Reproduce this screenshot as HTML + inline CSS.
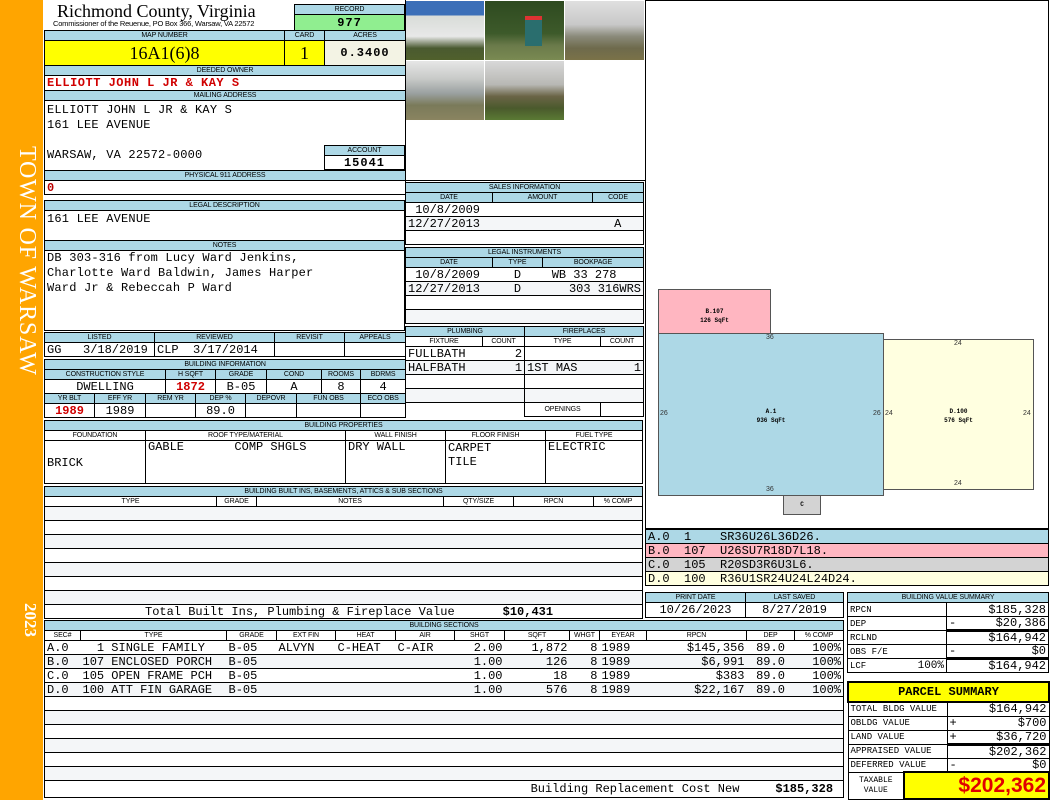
<!DOCTYPE html>
<html><head><meta charset="utf-8"><style>
*{margin:0;padding:0;box-sizing:border-box}
body{width:1050px;height:800px;position:relative;background:#fff;overflow:hidden;font-family:"Liberation Mono",monospace;font-size:12px;color:#000}
.a{position:absolute}
table{position:absolute;border-collapse:collapse;table-layout:fixed}
td{border:1px solid #000;padding:0 2px;overflow:hidden;white-space:nowrap;font:12px "Liberation Mono",monospace;height:14px;line-height:12px}
td.h,.h{background:#add8e6;font:7px "Liberation Sans",sans-serif;text-align:center;height:10px;line-height:9px;padding:0;letter-spacing:-.1px}
tr.g td{background:#f4f6f8}
.c{text-align:center}.r{text-align:right}
.box{position:absolute;border:1px solid #000}
.red{color:#d00000;font-weight:bold}
.bs td{border-left:none;border-right:none}
.bs td:first-child{border-left:1px solid #000}
.bs td:last-child{border-right:1px solid #000}
</style></head><body>
<div class="a" style="left:0;top:0;width:43px;height:800px;background:#ffa500"></div>
<div class="a" style="left:6px;top:146px;width:34px;height:250px;writing-mode:vertical-rl;font:24px 'Liberation Serif',serif;color:#fff;letter-spacing:.8px">TOWN OF WARSAW</div>
<div class="a" style="left:10px;top:603px;width:30px;height:60px;writing-mode:vertical-rl;font:bold 17px 'Liberation Serif',serif;color:#fff">2023</div>

<div class="a" style="left:57px;top:1px;font:18px 'Liberation Serif',serif">Richmond County, Virginia</div>
<div class="a" style="left:53px;top:19px;font:7.5px 'Liberation Sans',sans-serif;letter-spacing:-.2px">Commissioner of the Reuenue, PO Box 366, Warsaw, VA 22572</div>
<table style="left:294px;top:4px;width:111px"><tr><td class="h">RECORD</td></tr><tr><td class="c" style="background:#90ee90;font-weight:bold;height:16px;letter-spacing:1px">977</td></tr></table>

<table style="left:44px;top:30px;width:361px">
<col style="width:240px"><col style="width:40px"><col style="width:81px">
<tr><td class="h">MAP NUMBER</td><td class="h">CARD</td><td class="h">ACRES</td></tr>
<tr><td class="c" style="background:#ffff00;height:25px;font:18px 'Liberation Serif',serif">16A1(6)8</td><td class="c" style="background:#ffff00;font:18px 'Liberation Serif',serif">1</td><td class="c" style="background:#f3f3e4;font-weight:bold;letter-spacing:1px">0.3400</td></tr>
<tr><td colspan="3" class="h">DEEDED OWNER</td></tr>
<tr><td colspan="3" class="red" style="height:15px;letter-spacing:.5px">ELLIOTT JOHN L JR &amp; KAY S</td></tr>
<tr><td colspan="3" class="h">MAILING ADDRESS</td></tr>
<tr><td colspan="3" style="height:70px;vertical-align:top;line-height:15px;padding-top:2px;letter-spacing:.2px">ELLIOTT JOHN L JR &amp; KAY S<br>161 LEE AVENUE<br><br>WARSAW, VA 22572-0000</td></tr>
<tr><td colspan="3" class="h">PHYSICAL 911 ADDRESS</td></tr>
<tr><td colspan="3" style="color:#b00;font-weight:bold;height:14px">0</td></tr>
</table>
<table style="left:324px;top:145px;width:81px"><tr><td class="h">ACCOUNT</td></tr><tr><td class="c" style="font-weight:bold;background:#fff;letter-spacing:1px">15041</td></tr></table>

<table style="left:44px;top:200px;width:361px">
<tr><td class="h">LEGAL DESCRIPTION</td></tr>
<tr><td style="height:30px;vertical-align:top;padding-top:2px;letter-spacing:.2px">161 LEE AVENUE</td></tr>
<tr><td class="h">NOTES</td></tr>
<tr><td style="height:80px;vertical-align:top;line-height:15px;white-space:normal;letter-spacing:.2px">DB 303-316 from Lucy Ward Jenkins,<br>Charlotte Ward Baldwin, James Harper<br>Ward Jr &amp; Rebeccah P Ward</td></tr>
</table>

<table style="left:44px;top:332px;width:361px">
<col style="width:110px"><col style="width:120px"><col style="width:70px"><col style="width:61px">
<tr><td class="h">LISTED</td><td class="h">REVIEWED</td><td class="h">REVISIT</td><td class="h">APPEALS</td></tr>
<tr><td>GG&nbsp;&nbsp;&nbsp;3/18/2019</td><td>CLP&nbsp;&nbsp;3/17/2014</td><td></td><td></td></tr>
</table>

<table style="left:44px;top:359px;width:361px">
<col style="width:50px"><col style="width:51px"><col style="width:20px"><col style="width:30px"><col style="width:20px"><col style="width:30px"><col style="width:21px"><col style="width:30px"><col style="width:25px"><col style="width:19px"><col style="width:20px"><col style="width:45px">
<tr><td colspan="12" class="h">BUILDING INFORMATION</td></tr>
<tr><td colspan="3" class="h">CONSTRUCTION STYLE</td><td colspan="2" class="h">H SQFT</td><td colspan="2" class="h">GRADE</td><td colspan="2" class="h">COND</td><td colspan="2" class="h">ROOMS</td><td class="h">BDRMS</td></tr>
<tr><td colspan="3" class="c">DWELLING</td><td colspan="2" class="c red">1872</td><td colspan="2" class="c">B-05</td><td colspan="2" class="c">A</td><td colspan="2" class="c">8</td><td class="c">4</td></tr>
<tr><td class="h">YR BLT</td><td class="h">EFF YR</td><td colspan="2" class="h">REM YR</td><td colspan="2" class="h">DEP %</td><td colspan="2" class="h">DEPOVR</td><td colspan="3" class="h">FUN OBS</td><td class="h">ECO OBS</td></tr>
<tr><td class="c red">1989</td><td class="c">1989</td><td colspan="2"></td><td colspan="2" class="c">89.0</td><td colspan="2"></td><td colspan="3"></td><td></td></tr>
</table>

<div class="box" style="left:405px;top:0;width:241px;height:181px;border-top:none"></div>
<div class="a" style="left:406px;top:1px;width:78px;height:59px;background:linear-gradient(#3b6fb8 0,#3b6fb8 25%,#d8dcd8 25%,#e8e8e8 60%,#4a5a30 80%,#50602c)"></div>
<div class="a" style="left:485px;top:1px;width:79px;height:59px;background:linear-gradient(#2e4a20,#3d5a2a 55%,#6a7a4a 75%,#7a8a52)"></div>
<div class="a" style="left:525px;top:16px;width:17px;height:30px;background:#2a6e6e;border-top:4px solid #d33"></div>
<div class="a" style="left:565px;top:1px;width:79px;height:59px;background:linear-gradient(#e0e0e0,#c8c8c8 40%,#8a8a7a 60%,#6e6a4c 80%,#7a7248)"></div>
<div class="a" style="left:406px;top:61px;width:78px;height:59px;background:linear-gradient(#e6e6e6,#c8cac8 30%,#9aa0a0 55%,#7a7a5a 75%,#8a8460)"></div>
<div class="a" style="left:485px;top:61px;width:79px;height:59px;background:linear-gradient(#d8d8d8,#b8b8b4 40%,#6a6446 60%,#4a5a2c 80%,#5a7a34)"></div>

<table style="left:405px;top:182px;width:238px">
<col style="width:87px"><col style="width:100px"><col style="width:51px">
<tr><td colspan="3" class="h">SALES INFORMATION</td></tr>
<tr><td class="h">DATE</td><td class="h">AMOUNT</td><td class="h">CODE</td></tr>
<tr><td style="border-right:none">&nbsp;10/8/2009</td><td style="border-left:none;border-right:none"></td><td style="border-left:none"></td></tr>
<tr class="g"><td style="border-right:none">12/27/2013</td><td style="border-left:none;border-right:none"></td><td class="c" style="border-left:none">A</td></tr>
<tr><td colspan="3"></td></tr>
</table>
<table style="left:405px;top:247px;width:238px">
<col style="width:87px"><col style="width:50px"><col style="width:101px">
<tr><td colspan="3" class="h">LEGAL INSTRUMENTS</td></tr>
<tr><td class="h">DATE</td><td class="h">TYPE</td><td class="h">BOOKPAGE</td></tr>
<tr><td style="border-right:none">&nbsp;10/8/2009</td><td class="c" style="border:none;border-bottom:1px solid #000">D</td><td style="border-left:none">&nbsp;WB 33 278</td></tr>
<tr class="g"><td style="border-right:none">12/27/2013</td><td class="c" style="border:none;border-bottom:1px solid #000">D</td><td class="r" style="border-left:none">303 316WRS</td></tr>
<tr><td colspan="3"></td></tr>
<tr class="g"><td colspan="3"></td></tr>
</table>

<table style="left:405px;top:326px;width:238px">
<col style="width:77px"><col style="width:42px"><col style="width:76px"><col style="width:43px">
<tr><td colspan="2" class="h">PLUMBING</td><td colspan="2" class="h">FIREPLACES</td></tr>
<tr><td class="h" style="background:#fff">FIXTURE</td><td class="h" style="background:#fff">COUNT</td><td class="h" style="background:#fff">TYPE</td><td class="h" style="background:#fff">COUNT</td></tr>
<tr><td style="border-right:none">FULLBATH</td><td class="r" style="border-left:none">2</td><td colspan="2"></td></tr>
<tr class="g"><td style="border-right:none">HALFBATH</td><td class="r" style="border-left:none">1</td><td style="border-right:none">1ST MAS</td><td class="r" style="border-left:none">1</td></tr>
<tr><td colspan="2"></td><td colspan="2"></td></tr>
<tr class="g"><td colspan="2"></td><td colspan="2"></td></tr>
<tr><td colspan="2" style="border-left:none;border-bottom:none;background:#fff"></td><td class="h" style="background:#fff;height:14px">OPENINGS</td><td></td></tr>
</table>

<table style="left:44px;top:420px;width:598px">
<col style="width:101px"><col style="width:200px"><col style="width:100px"><col style="width:100px"><col style="width:97px">
<tr><td colspan="5" class="h">BUILDING PROPERTIES</td></tr>
<tr><td class="h" style="background:#fff">FOUNDATION</td><td class="h" style="background:#fff">ROOF TYPE/MATERIAL</td><td class="h" style="background:#fff">WALL FINISH</td><td class="h" style="background:#fff">FLOOR FINISH</td><td class="h" style="background:#fff">FUEL TYPE</td></tr>
<tr><td style="height:43px;vertical-align:top;padding-top:16px">BRICK</td><td style="vertical-align:top">GABLE&nbsp;&nbsp;&nbsp;&nbsp;&nbsp;&nbsp;&nbsp;COMP SHGLS</td><td style="vertical-align:top">DRY WALL</td><td style="vertical-align:top;line-height:14px">CARPET<br>TILE</td><td style="vertical-align:top">ELECTRIC</td></tr>
</table>

<table style="left:44px;top:486px;width:598px">
<col style="width:172px"><col style="width:40px"><col style="width:187px"><col style="width:70px"><col style="width:80px"><col style="width:49px">
<tr><td colspan="6" class="h">BUILDING BUILT INS, BASEMENTS, ATTICS &amp; SUB SECTIONS</td></tr>
<tr><td class="h" style="background:#fff">TYPE</td><td class="h" style="background:#fff">GRADE</td><td class="h" style="background:#fff">NOTES</td><td class="h" style="background:#fff">QTY/SIZE</td><td class="h" style="background:#fff">RPCN</td><td class="h" style="background:#fff">% COMP</td></tr>
<tr class="g"><td colspan="6"></td></tr><tr><td colspan="6"></td></tr><tr class="g"><td colspan="6"></td></tr><tr><td colspan="6"></td></tr><tr class="g"><td colspan="6"></td></tr><tr><td colspan="6"></td></tr><tr class="g"><td colspan="6"></td></tr>
<tr><td colspan="6" style="height:14px"><span style="position:relative;left:98px">Total Built Ins, Plumbing &amp; Fireplace Value</span><b style="position:relative;left:146px">$10,431</b></td></tr>
</table>

<table class="bs" style="left:44px;top:620px;width:799px">
<col style="width:36px"><col style="width:146px"><col style="width:50px"><col style="width:59px"><col style="width:60px"><col style="width:59px"><col style="width:50px"><col style="width:65px"><col style="width:30px"><col style="width:47px"><col style="width:100px"><col style="width:48px"><col style="width:49px">
<tr><td colspan="13" class="h" style="border:1px solid #000">BUILDING SECTIONS</td></tr>
<tr><td class="h" style="background:#fff;border:1px solid #000">SEC#</td><td class="h" style="background:#fff;border:1px solid #000">TYPE</td><td class="h" style="background:#fff;border:1px solid #000">GRADE</td><td class="h" style="background:#fff;border:1px solid #000">EXT FIN</td><td class="h" style="background:#fff;border:1px solid #000">HEAT</td><td class="h" style="background:#fff;border:1px solid #000">AIR</td><td class="h" style="background:#fff;border:1px solid #000">SHGT</td><td class="h" style="background:#fff;border:1px solid #000">SQFT</td><td class="h" style="background:#fff;border:1px solid #000">WHGT</td><td class="h" style="background:#fff;border:1px solid #000">EYEAR</td><td class="h" style="background:#fff;border:1px solid #000">RPCN</td><td class="h" style="background:#fff;border:1px solid #000">DEP</td><td class="h" style="background:#fff;border:1px solid #000">% COMP</td></tr>
<tr><td>A.0</td><td>&nbsp;&nbsp;1 SINGLE FAMILY</td><td>B-05</td><td>ALVYN</td><td>C-HEAT</td><td>C-AIR</td><td class="r">2.00</td><td class="r">1,872</td><td class="r">8</td><td>1989</td><td class="r">$145,356</td><td class="c">89.0</td><td class="r">100%</td></tr>
<tr class="g"><td>B.0</td><td>107 ENCLOSED PORCH</td><td>B-05</td><td></td><td></td><td></td><td class="r">1.00</td><td class="r">126</td><td class="r">8</td><td>1989</td><td class="r">$6,991</td><td class="c">89.0</td><td class="r">100%</td></tr>
<tr><td>C.0</td><td>105 OPEN FRAME PCH</td><td>B-05</td><td></td><td></td><td></td><td class="r">1.00</td><td class="r">18</td><td class="r">8</td><td>1989</td><td class="r">$383</td><td class="c">89.0</td><td class="r">100%</td></tr>
<tr class="g"><td>D.0</td><td>100 ATT FIN GARAGE</td><td>B-05</td><td></td><td></td><td></td><td class="r">1.00</td><td class="r">576</td><td class="r">8</td><td>1989</td><td class="r">$22,167</td><td class="c">89.0</td><td class="r">100%</td></tr>
<tr><td colspan="13" style="border:1px solid #000"></td></tr><tr class="g"><td colspan="13" style="border:1px solid #000"></td></tr><tr><td colspan="13" style="border:1px solid #000"></td></tr><tr class="g"><td colspan="13" style="border:1px solid #000"></td></tr><tr><td colspan="13" style="border:1px solid #000"></td></tr><tr class="g"><td colspan="13" style="border:1px solid #000"></td></tr>
<tr><td colspan="13" style="height:17px;text-align:right;padding-right:10px;border:1px solid #000">Building Replacement Cost New&nbsp;&nbsp;&nbsp;&nbsp;&nbsp;<b>$185,328</b></td></tr>
</table>

<div class="box" style="left:645px;top:0;width:404px;height:529px"></div>
<div class="a" style="left:658px;top:289px;width:113px;height:45px;background:#ffb6c1;border:1px solid #555;font:bold 6px 'Liberation Mono',monospace;text-align:center;padding-top:17px;line-height:9px">B.107<br>126 SqFt</div>
<div class="a" style="left:883px;top:339px;width:151px;height:151px;background:#ffffe0;border:1px solid #555;font:bold 6px 'Liberation Mono',monospace;text-align:center;padding-top:67px;line-height:9px">D.100<br>576 SqFt</div>
<div class="a" style="left:658px;top:333px;width:226px;height:163px;background:#add8e6;border:1px solid #555;font:bold 6px 'Liberation Mono',monospace;text-align:center;padding-top:73px;line-height:9px">A.1<br>936 SqFt</div>
<div class="a" style="left:783px;top:495px;width:38px;height:20px;background:#d3d3d3;border:1px solid #555;font:bold 6px 'Liberation Mono',monospace;text-align:center;line-height:18px">C</div>
<div class="a" style="font:7px 'Liberation Sans',sans-serif;color:#333;left:766px;top:334px">36</div>
<div class="a" style="font:7px 'Liberation Sans',sans-serif;color:#333;left:766px;top:486px">36</div>
<div class="a" style="font:7px 'Liberation Sans',sans-serif;color:#333;left:660px;top:410px">26</div>
<div class="a" style="font:7px 'Liberation Sans',sans-serif;color:#333;left:873px;top:410px">26</div>
<div class="a" style="font:7px 'Liberation Sans',sans-serif;color:#333;left:885px;top:410px">24</div>
<div class="a" style="font:7px 'Liberation Sans',sans-serif;color:#333;left:1023px;top:410px">24</div>
<div class="a" style="font:7px 'Liberation Sans',sans-serif;color:#333;left:954px;top:340px">24</div>
<div class="a" style="font:7px 'Liberation Sans',sans-serif;color:#333;left:954px;top:480px">24</div>

<table style="left:645px;top:529px;width:404px">
<tr><td style="background:#add8e6;font-size:12px;height:14px">A.0&nbsp;&nbsp;1&nbsp;&nbsp;&nbsp;&nbsp;SR36U26L36D26.</td></tr>
<tr><td style="background:#ffb6c1;font-size:12px">B.0&nbsp;&nbsp;107&nbsp;&nbsp;U26SU7R18D7L18.</td></tr>
<tr><td style="background:#d3d3d3;font-size:12px">C.0&nbsp;&nbsp;105&nbsp;&nbsp;R20SD3R6U3L6.</td></tr>
<tr><td style="background:#ffffe0;font-size:12px">D.0&nbsp;&nbsp;100&nbsp;&nbsp;R36U1SR24U24L24D24.</td></tr>
</table>

<table style="left:645px;top:592px;width:198px">
<col style="width:100px"><col style="width:98px">
<tr><td class="h">PRINT DATE</td><td class="h">LAST SAVED</td></tr>
<tr><td class="c" style="font-size:12px;height:15px">10/26/2023</td><td class="c" style="font-size:12px">8/27/2019</td></tr>
</table>

<table style="left:847px;top:592px;width:201px">
<col style="width:99px"><col style="width:102px">
<tr><td colspan="2" class="h">BUILDING VALUE SUMMARY</td></tr>
<tr><td style="font-size:9px">RPCN</td><td class="r" style="font-size:12px">$185,328</td></tr>
<tr><td style="font-size:9px">DEP</td><td class="r" style="font-size:12px;border-bottom:3px solid #000"><span style="float:left">-</span>$20,386</td></tr>
<tr><td style="font-size:9px">RCLND</td><td class="r" style="font-size:12px">$164,942</td></tr>
<tr><td style="font-size:9px">OBS F/E</td><td class="r" style="font-size:12px;border-bottom:3px solid #000"><span style="float:left">-</span>$0</td></tr>
<tr><td style="font-size:9px">LCF<span style="float:right;font-size:11px">100%</span></td><td class="r" style="font-size:12px">$164,942</td></tr>
</table>

<table style="left:847px;top:681px;width:201px">
<col style="width:56px"><col style="width:43px"><col style="width:102px">
<tr><td colspan="3" class="c" style="background:#ffff00;font-weight:bold;font-size:12px;height:20px;border:2px solid #000">PARCEL SUMMARY</td></tr>
<tr><td colspan="2" style="font-size:9px">TOTAL BLDG VALUE</td><td class="r" style="font-size:12px">$164,942</td></tr>
<tr><td colspan="2" style="font-size:9px">OBLDG VALUE</td><td class="r" style="font-size:12px"><span style="float:left">+</span>$700</td></tr>
<tr><td colspan="2" style="font-size:9px">LAND VALUE</td><td class="r" style="font-size:12px;border-bottom:3px solid #000"><span style="float:left">+</span>$36,720</td></tr>
<tr><td colspan="2" style="font-size:9px">APPRAISED VALUE</td><td class="r" style="font-size:12px">$202,362</td></tr>
<tr><td colspan="2" style="font-size:9px">DEFERRED VALUE</td><td class="r" style="font-size:12px"><span style="float:left">-</span>$0</td></tr>
<tr><td class="c" style="font-size:8px;line-height:10px;height:27px">TAXABLE<br>VALUE</td><td colspan="2" class="r" style="background:#ffff00;color:#e00000;font:bold 21px 'Liberation Sans',sans-serif;border:2px solid #000">$202,362</td></tr>
</table>
</body></html>
